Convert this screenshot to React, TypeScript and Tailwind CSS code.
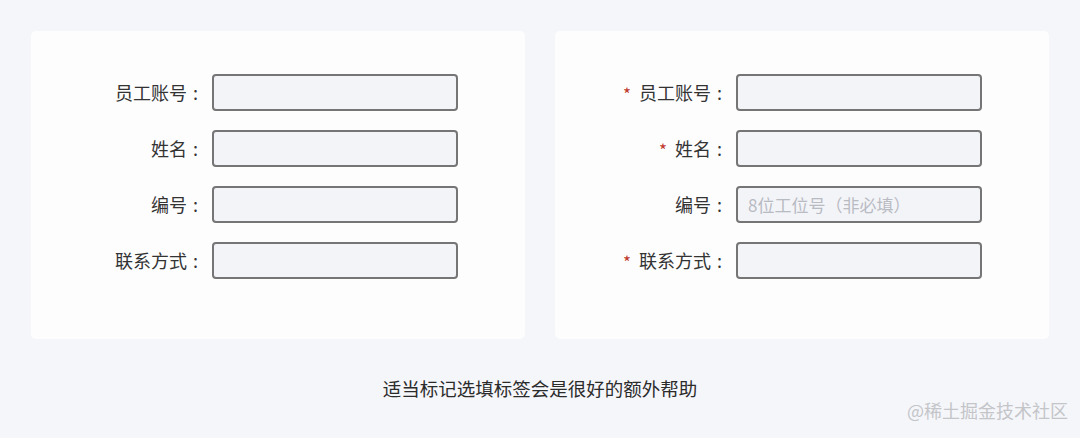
const fields = [
  { label: "员工账号", required: true },
  { label: "姓名", required: true },
  { label: "编号", required: false, placeholder: "8位工位号（非必填）" },
  { label: "联系方式", required: true },
];

function FormCard({ marked }: { marked: boolean }) {
  return (
    <div className="w-[494px] h-[308px] bg-[#fdfdfe] rounded-[5px] pt-[43px]">
      <div className="flex flex-col gap-[19px]">
        {fields.map((f) => (
          <div key={f.label} className="flex items-center">
            <div className="w-[168px] flex items-center justify-end text-[18px] text-[#333]">
              {marked && f.required && (
                <span className="text-[#c0392b] text-[17px] mr-[8px] mt-[2px]">*</span>
              )}
              <span>{f.label}</span>
              <span className="ml-[6px] mr-[1px]">:</span>
            </div>
            <div className="ml-[13px] w-[246px] h-[37px] border-2 border-[#757575] rounded-[4px] bg-[#f3f4f8] flex items-center px-[10px] text-[17px] text-[#b9bbc3]">
              {marked && f.placeholder}
            </div>
          </div>
        ))}
      </div>
    </div>
  );
}

export default function App() {
  return (
    <div
      className="relative w-[1080px] h-[438px] bg-[#f5f6fa] pt-[31px] pl-[31px]"
      style={{ fontFamily: '"Noto Sans CJK SC", "Noto Sans", sans-serif' }}
    >
      <div className="flex gap-[30px]">
        <FormCard marked={false} />
        <FormCard marked={true} />
      </div>
      <p className="mt-[36px] pr-[31px] text-center text-[18.5px] text-[#2b2b2b]">
        适当标记选填标签会是很好的额外帮助
      </p>
      <span className="absolute right-[12px] bottom-[14px] text-[18px] text-[#c4c5c9]">
        @稀土掘金技术社区
      </span>
    </div>
  );
}
